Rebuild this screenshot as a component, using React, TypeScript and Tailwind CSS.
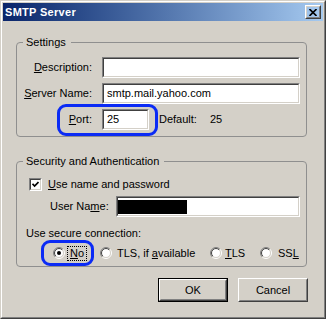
/**
 * Classic Win2000-style "SMTP Server" dialog with two group boxes
 * and the blue hand-drawn highlight rings from the screenshot.
 */
import type { ReactNode } from "react";

function U({ children }: { children: ReactNode }) {
  return <span className="underline underline-offset-[1px]">{children}</span>;
}

/** Sunken 2px edit box. */
function Field({ className = "", pad = true, children }: { className?: string; pad?: boolean; children?: ReactNode }) {
  return (
    <div className={`border border-t-[#808080] border-l-[#808080] border-b-white border-r-white ${className}`}>
      <div
        className={`flex h-full items-center border border-t-[#404040] border-l-[#404040] border-b-[#d4d0c8] border-r-[#d4d0c8] bg-white ${pad ? "pl-[3px]" : ""}`}
      >
        {children}
      </div>
    </div>
  );
}

function Button({ children, isDefault }: { children: ReactNode; isDefault?: boolean }) {
  const face = (
    <div className="h-full w-full border border-t-white border-l-white border-b-[#404040] border-r-[#404040]">
      <div className="flex h-full w-full items-center justify-center border border-t-[#d4d0c8] border-l-[#d4d0c8] border-b-[#808080] border-r-[#808080]">
        {children}
      </div>
    </div>
  );
  return (
    <div className={`h-[24px] w-[70px] ${isDefault ? "border border-black" : ""}`}>{face}</div>
  );
}

function Radio({ checked }: { checked?: boolean }) {
  return (
    <svg width="12" height="12" viewBox="0 0 12 12" className="shrink-0">
      <defs>
        <linearGradient id="rOuter" x1="0" y1="0" x2="1" y2="1">
          <stop offset="0.45" stopColor="#808080" />
          <stop offset="0.55" stopColor="#ffffff" />
        </linearGradient>
        <linearGradient id="rInner" x1="0" y1="0" x2="1" y2="1">
          <stop offset="0.45" stopColor="#404040" />
          <stop offset="0.55" stopColor="#d4d0c8" />
        </linearGradient>
      </defs>
      <circle cx="6" cy="6" r="5.5" fill="none" stroke="url(#rOuter)" strokeWidth="1" />
      <circle cx="6" cy="6" r="4.5" fill="#ffffff" stroke="url(#rInner)" strokeWidth="1" />
      {checked && <circle cx="6" cy="6" r="2" fill="#000" />}
    </svg>
  );
}

function Checkbox() {
  return (
    <div className="h-[13px] w-[13px] shrink-0 border border-t-[#808080] border-l-[#808080] border-b-white border-r-white">
      <div className="flex h-full w-full items-center justify-center border border-t-[#404040] border-l-[#404040] border-b-[#d4d0c8] border-r-[#d4d0c8] bg-white">
        <svg width="7" height="7" viewBox="0 0 7 7">
          <path d="M0.5 2.8 L2.6 5 L6.5 1" fill="none" stroke="#000" strokeWidth="1.7" />
        </svg>
      </div>
    </div>
  );
}

function Group({ title, className = "", children }: { title: string; className?: string; children: ReactNode }) {
  return (
    <fieldset className={`w-[291px] rounded-[4px] border border-[#8f8f8f] ${className}`}>
      <legend className="ml-[6px] pl-[3px] pr-[5px] leading-[13px]">{title}</legend>
      {children}
    </fieldset>
  );
}

export default function App() {
  return (
    <div className="h-[319px] w-[326px] border border-t-[#d4d0c8] border-l-[#d4d0c8] border-b-[#404040] border-r-[#404040] bg-[#d4d0c8] font-['Liberation_Sans',Arial,sans-serif] text-[11px] leading-[13px] text-black">
      <div className="flex h-full flex-col border border-t-white border-l-white border-b-[#808080] border-r-[#808080] p-px">
        {/* title bar */}
        <div className="flex h-[18px] items-center justify-between bg-linear-to-r from-[#0a246a] to-[#a6caf0] pl-[2px] pr-[2px]">
          <span className="text-[11px] font-bold tracking-[0.3px] text-white">SMTP Server</span>
          <div className="h-[14px] w-[16px] border border-t-white border-l-white border-b-[#404040] border-r-[#404040]">
            <div className="flex h-full w-full items-center justify-center border border-t-[#d4d0c8] border-l-[#d4d0c8] border-b-[#808080] border-r-[#808080]">
              <svg width="8" height="7" viewBox="0 0 8 7">
                <path d="M0.5 0 L7.5 7 M7.5 0 L0.5 7" stroke="#000" strokeWidth="1.6" />
              </svg>
            </div>
          </div>
        </div>

        <div className="flex flex-col pl-[13px]">
          <Group title="Settings" className="mt-[15px] pb-[6px]">
            <div className="relative grid grid-cols-[75px_198px] items-center gap-x-[10px] gap-y-[5px] pt-[8px]">
              <span className="text-right">
                <U>D</U>escription:
              </span>
              <Field className="h-[21px]" />
              <span className="text-right">
                <U>S</U>erver Name:
              </span>
              <Field className="h-[21px]">smtp.mail.yahoo.com</Field>
              <span className="text-right">
                <U>P</U>ort:
              </span>
              <div className="flex items-center">
                <Field className="h-[21px] w-[47px]">25</Field>
                <span className="ml-[10px]">Default:</span>
                <span className="ml-[13px]">25</span>
              </div>
              {/* blue highlight ring */}
              <span className="pointer-events-none absolute left-[40px] top-[55px] h-[32px] w-[101px] rounded-[9px] border-[3px] border-[#0b2bf5]" />
            </div>
          </Group>

          <Group title="Security and Authentication" className="mt-[18px] pb-[5px]">
            <div className="flex flex-col pt-[10px]">
              <div className="flex h-[13px] items-center gap-[6px] pl-[12px]">
                <Checkbox />
                <span>
                  <U>U</U>se name and password
                </span>
              </div>
              <div className="mt-[5px] flex items-center pl-[33px]">
                <span className="w-[66px]">
                  User Na<U>m</U>e:
                </span>
                <Field className="h-[21px] w-[184px]" pad={false}>
                  <div className="h-[14px] w-[69px] bg-black" />
                </Field>
              </div>
              <div className="mt-[10px] pl-[9px]">Use secure connection:</div>
              <div className="relative mt-[5px] flex h-[16px] items-center pl-[36px]">
                <div className="flex w-[47px] items-center">
                  <Radio checked />
                  <span className="ml-[2px] border border-dotted border-black px-[2px]">
                    <U>N</U>o
                  </span>
                </div>
                <div className="flex w-[110px] items-center">
                  <Radio />
                  <span className="ml-[5px]">
                    TLS, if <U>a</U>vailable
                  </span>
                </div>
                <div className="flex w-[50px] items-center">
                  <Radio />
                  <span className="ml-[3px]">
                    <U>T</U>LS
                  </span>
                </div>
                <div className="flex items-center">
                  <Radio />
                  <span className="ml-[6px]">
                    SS<U>L</U>
                  </span>
                </div>
                <span className="pointer-events-none absolute left-[24px] top-[-5px] h-[26px] w-[53px] rounded-[9px] border-[3px] border-[#0b2bf5]" />
              </div>
            </div>
          </Group>
        </div>

        <div className="mt-[11px] flex justify-end gap-[10px] pr-[15px]">
          <Button isDefault>OK</Button>
          <Button>Cancel</Button>
        </div>
      </div>
    </div>
  );
}
